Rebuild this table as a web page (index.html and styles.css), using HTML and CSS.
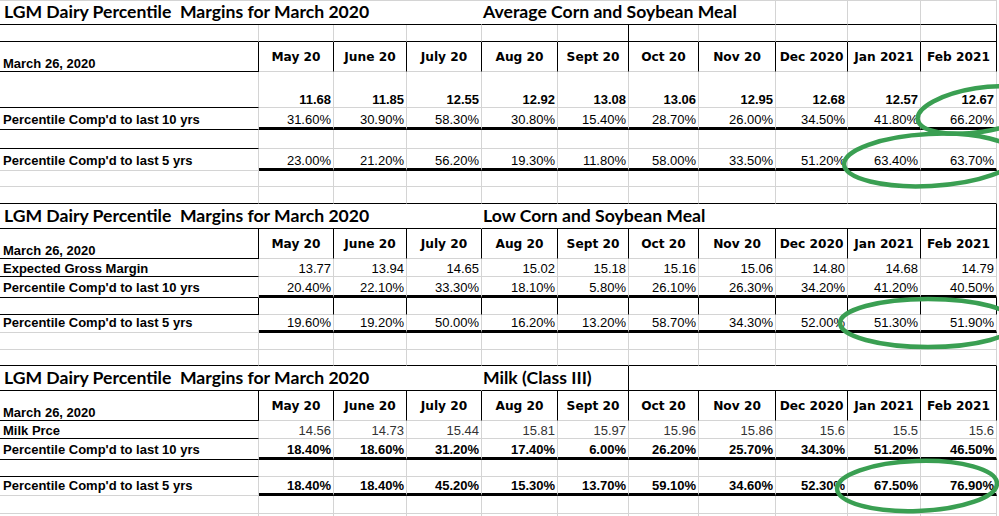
FILE: index.html
```html
<!DOCTYPE html>
<html lang="en">
<head>
<meta charset="utf-8">
<title>LGM Dairy Percentile Margins for March 2020</title>
<link rel="stylesheet" href="styles.css">
</head>
<body>
<div class="sheet">
<table class="grid">
<colgroup>
<col class="ca"><col class="c75"><col class="c73"><col class="c75"><col class="c76"><col class="c71"><col class="c70"><col class="c77"><col class="c72"><col class="c73"><col class="c76">
</colgroup>
<tbody>
<!-- Section 1 -->
<tr class="h24">
<td colspan="4" class="ttl bk-b nr">LGM Dairy Percentile  Margins for March 2020</td>
<td colspan="4" class="ttl sub bk-b">Average Corn and Soybean Meal</td>
<td class="bk-b"></td><td class="bk-b"></td><td class="bk-b"></td>
</tr>
<tr class="h17">
<td class="bk-b"></td><td class="bk-b"></td><td class="bk-b"></td><td class="bk-b"></td><td class="bk-b"></td><td class="bk-b bk-r"></td><td class="bk-b"></td><td class="bk-b"></td><td class="bk-b"></td><td class="bk-b"></td><td class="bk-b bk-r"></td>
</tr>
<tr class="h30">
<td class="lab date bk-b bk-r">March 26, 2020</td>
<td class="hd bk-r">May 20</td><td class="hd bk-r">June 20</td><td class="hd bk-r">July 20</td><td class="hd bk-r">Aug 20</td><td class="hd bk-r">Sept 20</td><td class="hd bk-r">Oct 20</td><td class="hd bk-r">Nov 20</td><td class="hd bk-r">Dec 2020</td><td class="hd bk-r">Jan 2021</td><td class="hd bk-r">Feb 2021</td>
</tr>
<tr class="h36">
<td class="bk-b"></td>
<td class="num b">11.68</td><td class="num b">11.85</td><td class="num b">12.55</td><td class="num b">12.92</td><td class="num b">13.08</td><td class="num b">13.06</td><td class="num b">12.95</td><td class="num b">12.68</td><td class="num b">12.57</td><td class="num b">12.67</td>
</tr>
<tr class="h22">
<td class="lab bk-b pb">Percentile Comp'd to last 10 yrs</td>
<td class="num thick">31.60%</td><td class="num thick">30.90%</td><td class="num thick">58.30%</td><td class="num thick">30.80%</td><td class="num thick">15.40%</td><td class="num thick">28.70%</td><td class="num thick">26.00%</td><td class="num thick">34.50%</td><td class="num thick">41.80%</td><td class="num thick">66.20%</td>
</tr>
<tr class="h19">
<td class="bk-b"></td><td></td><td></td><td></td><td></td><td></td><td></td><td></td><td></td><td></td><td></td>
</tr>
<tr class="h22">
<td class="lab pb">Percentile Comp'd to last 5 yrs</td>
<td class="num thick">23.00%</td><td class="num thick">21.20%</td><td class="num thick">56.20%</td><td class="num thick">19.30%</td><td class="num thick">11.80%</td><td class="num thick">58.00%</td><td class="num thick">33.50%</td><td class="num thick">51.20%</td><td class="num thick">63.40%</td><td class="num thick">63.70%</td>
</tr>
<tr class="h16">
<td></td><td></td><td></td><td></td><td></td><td></td><td></td><td></td><td></td><td></td><td></td>
</tr>
<tr class="h17">
<td class="bk-b"></td><td class="bk-b"></td><td class="bk-b"></td><td class="bk-b"></td><td class="bk-b"></td><td class="bk-b"></td><td class="bk-b"></td><td class="bk-b"></td><td class="bk-b"></td><td class="bk-b"></td><td class="bk-b"></td>
</tr>
<!-- Section 2 -->
<tr class="h25">
<td colspan="4" class="ttl bk-b nr">LGM Dairy Percentile  Margins for March 2020</td>
<td colspan="7" class="ttl sub bk-b bk-r">Low Corn and Soybean Meal</td>
</tr>
<tr class="h30">
<td class="lab date bk-b bk-r">March 26, 2020</td>
<td class="hd bk-r">May 20</td><td class="hd bk-r">June 20</td><td class="hd bk-r">July 20</td><td class="hd bk-r">Aug 20</td><td class="hd bk-r">Sept 20</td><td class="hd bk-r">Oct 20</td><td class="hd bk-r">Nov 20</td><td class="hd bk-r">Dec 2020</td><td class="hd bk-r">Jan 2021</td><td class="hd bk-r">Feb 2021</td>
</tr>
<tr class="h18">
<td class="lab bk-b">Expected Gross Margin</td>
<td class="num">13.77</td><td class="num">13.94</td><td class="num">14.65</td><td class="num">15.02</td><td class="num">15.18</td><td class="num">15.16</td><td class="num">15.06</td><td class="num">14.80</td><td class="num">14.68</td><td class="num">14.79</td>
</tr>
<tr class="h21">
<td class="lab bk-b pb">Percentile Comp'd to last 10 yrs</td>
<td class="num thick">20.40%</td><td class="num thick">22.10%</td><td class="num thick">33.30%</td><td class="num thick">18.10%</td><td class="num thick">5.80%</td><td class="num thick">26.10%</td><td class="num thick">26.30%</td><td class="num thick">34.20%</td><td class="num thick">41.20%</td><td class="num thick">40.50%</td>
</tr>
<tr class="h17">
<td class="bk-b bk-r"></td><td class="bk-r"></td><td class="bk-r"></td><td class="bk-r"></td><td class="bk-r"></td><td class="bk-r"></td><td class="bk-r"></td><td class="bk-r"></td><td class="bk-r"></td><td class="bk-r"></td><td class="bk-r"></td>
</tr>
<tr class="h18">
<td class="lab pb">Percentile Comp'd to last 5 yrs</td>
<td class="num thick">19.60%</td><td class="num thick">19.20%</td><td class="num thick">50.00%</td><td class="num thick">16.20%</td><td class="num thick">13.20%</td><td class="num thick">58.70%</td><td class="num thick">34.30%</td><td class="num thick">52.00%</td><td class="num thick">51.30%</td><td class="num thick">51.90%</td>
</tr>
<tr class="h17">
<td></td><td></td><td></td><td></td><td></td><td></td><td></td><td></td><td></td><td></td><td></td>
</tr>
<tr class="h16">
<td class="bk-b"></td><td class="bk-b"></td><td class="bk-b"></td><td class="bk-b"></td><td class="bk-b"></td><td class="bk-b"></td><td class="bk-b"></td><td class="bk-b"></td><td class="bk-b"></td><td class="bk-b"></td><td class="bk-b"></td>
</tr>
<!-- Section 3 -->
<tr class="h25">
<td colspan="4" class="ttl bk-b nr">LGM Dairy Percentile  Margins for March 2020</td>
<td colspan="2" class="ttl sub bk-b bk-r">Milk (Class III)</td>
<td colspan="5" class="bk-b bk-r"></td>
</tr>
<tr class="h30">
<td class="lab date bk-b bk-r">March 26, 2020</td>
<td class="hd bk-r">May 20</td><td class="hd bk-r">June 20</td><td class="hd bk-r">July 20</td><td class="hd bk-r">Aug 20</td><td class="hd bk-r">Sept 20</td><td class="hd bk-r">Oct 20</td><td class="hd bk-r">Nov 20</td><td class="hd bk-r">Dec 2020</td><td class="hd bk-r">Jan 2021</td><td class="hd bk-r">Feb 2021</td>
</tr>
<tr class="h18">
<td class="lab bk-b">Milk Prce</td>
<td class="num lt">14.56</td><td class="num lt">14.73</td><td class="num lt">15.44</td><td class="num lt">15.81</td><td class="num lt">15.97</td><td class="num lt">15.96</td><td class="num lt">15.86</td><td class="num lt">15.6</td><td class="num lt">15.5</td><td class="num lt">15.6</td>
</tr>
<tr class="h21">
<td class="lab bk-b pb">Percentile Comp'd to last 10 yrs</td>
<td class="num b thick">18.40%</td><td class="num b thick">18.60%</td><td class="num b thick">31.20%</td><td class="num b thick">17.40%</td><td class="num b thick">6.00%</td><td class="num b thick">26.20%</td><td class="num b thick">25.70%</td><td class="num b thick">34.30%</td><td class="num b thick">51.20%</td><td class="num b thick">46.50%</td>
</tr>
<tr class="h17">
<td class="bk-b"></td><td></td><td></td><td></td><td></td><td></td><td></td><td></td><td></td><td></td><td></td>
</tr>
<tr class="h19">
<td class="lab pb">Percentile Comp'd to last 5 yrs</td>
<td class="num b thick">18.40%</td><td class="num b thick">18.40%</td><td class="num b thick">45.20%</td><td class="num b thick">15.30%</td><td class="num b thick">13.70%</td><td class="num b thick">59.10%</td><td class="num b thick">34.60%</td><td class="num b thick">52.30%</td><td class="num b thick">67.50%</td><td class="num b thick">76.90%</td>
</tr>
<tr class="h18">
<td></td><td></td><td></td><td></td><td></td><td></td><td></td><td></td><td></td><td></td><td></td>
</tr>
<tr class="h10">
<td></td><td></td><td></td><td></td><td></td><td></td><td></td><td></td><td></td><td></td><td></td>
</tr>
</tbody>
</table>

<svg class="marks" width="999" height="516" viewBox="0 0 999 516" aria-hidden="true">
<g fill="none" stroke="#3a9f52" stroke-width="4.5">
<ellipse cx="979" cy="110" rx="62" ry="22" transform="rotate(-9 979 110)"/>
<ellipse cx="930" cy="160" rx="86" ry="26" transform="rotate(-3 930 160)"/>
<ellipse cx="928" cy="323" rx="88" ry="24"/>
<ellipse cx="917" cy="486" rx="80" ry="25" transform="rotate(-2 917 486)"/>
</g>
</svg>
</div>
</body>
</html>
```
FILE: styles.css
```css
html, body {
  margin: 0;
  padding: 0;
  background: #ffffff;
}

.sheet {
  position: relative;
  width: 999px;
  height: 516px;
  overflow: hidden;
  background: #ffffff;
}

.grid {
  border-collapse: separate;
  border-spacing: 0;
  table-layout: fixed;
  width: 997px;
  border-top: 1px solid #d4d4d4;
  font-family: "Liberation Sans", Arial, sans-serif;
  font-size: 13px;
  color: #000;
}

.ca { width: 259px; }
.c70 { width: 70px; }
.c71 { width: 71px; }
.c72 { width: 72px; }
.c73 { width: 73px; }
.c75 { width: 75px; }
.c76 { width: 76px; }
.c77 { width: 77px; }

.grid td {
  box-sizing: border-box;
  border-right: 1px solid #d4d4d4;
  border-bottom: 1px solid #d4d4d4;
  padding: 0 2px 0 2px;
  line-height: 15px;
  vertical-align: bottom;
  white-space: nowrap;
  overflow: visible;
}

.h10 { height: 10px; }
.h16 { height: 16px; }
.h17 { height: 17px; }
.h18 { height: 18px; }
.h19 { height: 19px; }
.h21 { height: 21px; }
.h22 { height: 22px; }
.h24 { height: 24px; }
.h25 { height: 25px; }
.h30 { height: 30px; }
.h36 { height: 36px; }

.grid td.bk-b { border-bottom-color: #000; }
.grid td.bk-r { border-right-color: #000; }
.grid td.nr { border-right-color: transparent; }
.grid td.thick { border-bottom: 3px solid #000; }
.grid td.pb { padding-bottom: 2px; }

.grid td.ttl {
  font-family: Lato, "Open Sans", sans-serif;
  font-weight: 700;
  font-size: 17.6px;
  line-height: 20px;
  white-space: pre;
  padding-left: 4px;
  padding-bottom: 2px;
}

.grid td.sub { padding-left: 1px; }

.grid td.lab {
  text-align: left;
  padding-left: 3px;
  font-weight: 700;
}

.grid td.date { font-size: 13px; }

.grid td.hd {
  font-family: "DejaVu Sans", Verdana, sans-serif;
  font-weight: 700;
  font-size: 12.2px;
  text-align: center;
  vertical-align: middle;
  padding: 1px 0 0 0;
}

.grid td.num {
  text-align: right;
  padding-right: 2px;
}

.b { font-weight: 700; }
.lt { color: #333; }

.marks {
  position: absolute;
  left: 0;
  top: 0;
  pointer-events: none;
}
```
